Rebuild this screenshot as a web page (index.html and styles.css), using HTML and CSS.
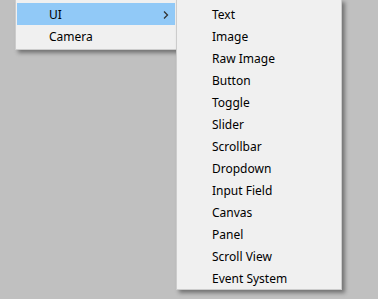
FILE: index.html
```html
<!DOCTYPE html>
<html>
<head>
<meta charset="utf-8">
<link rel="stylesheet" href="styles.css">
</head>
<body>
<div class="stage">
  <div class="menu main">
    <div class="item active"><span>UI</span>
      <svg class="chev" width="6" height="8" viewBox="0 0 6 8"><polyline points="1,0.5 4.5,4 1,7.5" fill="none" stroke="#333" stroke-width="1.3"/></svg>
    </div>
    <div class="item"><span>Camera</span></div>
  </div>
  <div class="menu sub">
    <div class="item"><span>Text</span></div>
    <div class="item"><span>Image</span></div>
    <div class="item"><span>Raw Image</span></div>
    <div class="item"><span>Button</span></div>
    <div class="item"><span>Toggle</span></div>
    <div class="item"><span>Slider</span></div>
    <div class="item"><span>Scrollbar</span></div>
    <div class="item"><span>Dropdown</span></div>
    <div class="item"><span>Input Field</span></div>
    <div class="item"><span>Canvas</span></div>
    <div class="item"><span>Panel</span></div>
    <div class="item"><span>Scroll View</span></div>
    <div class="item"><span>Event System</span></div>
  </div>
</div>
</body>
</html>
```
FILE: styles.css
```css
html, body {
  margin: 0;
  padding: 0;
  background: #c0c0c0;
  width: 378px;
  height: 299px;
  overflow: hidden;
}
body {
  font-family: "Noto Sans", sans-serif;
  font-size: 12px;
  color: #000;
}
.stage {
  position: relative;
  width: 378px;
  height: 299px;
}
.menu {
  background: #f0f0f0;
  border: 1px solid #cccccc;
  box-shadow: 3px 3px 4px rgba(0, 0, 0, 0.4);
  box-sizing: border-box;
}
.main {
  margin-left: 15px;
  margin-top: -1px;
  width: 162px;
  padding: 3px 1px 2px 1px;
}
.item {
  height: 22px;
  box-sizing: border-box;
  padding-top: 2px;
  line-height: 20px;
  display: flex;
  align-items: center;
  white-space: nowrap;
}
.main .item {
  padding-left: 32px;
  padding-right: 6px;
}
.main .item span {
  flex: 1;
}
.item.active {
  background: #91c9f7;
}
.chev {
  display: block;
  margin-top: -1px;
}
.sub {
  position: absolute;
  left: 176px;
  top: 0;
  width: 166px;
  height: 291px;
  padding: 3px 1px 0 1px;
}
.sub .item {
  padding-left: 34px;
}
```
